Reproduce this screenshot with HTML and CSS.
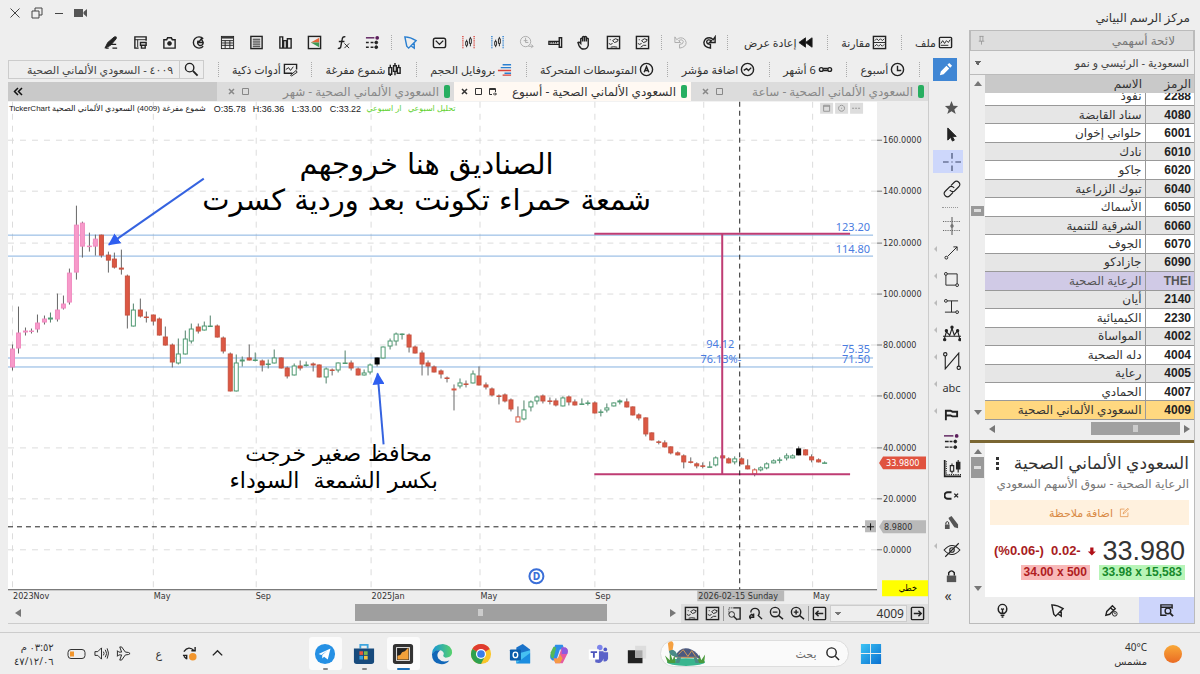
FILE: index.html
```
<!DOCTYPE html>
<html lang="ar" dir="rtl">
<head>
    <meta charset="UTF-8">
    <meta name="viewport" content="width=device-width, initial-scale=1.0">
    <title>مركز الرسم البياني</title>
    <link rel="stylesheet" href="styles.css">
</head>
<body>
    <header class="titlebar">
        <h1>مركز الرسم البياني</h1>
        <div class="window-controls">
            <button aria-label="إغلاق"><svg viewBox="0 0 16 16"><path d="M3.500 3.500l9 9M12.500 3.500l-9 9"/></svg></button>
            <button aria-label="تصغير النافذة"><svg viewBox="0 0 16 16"><path d="M3 6h7v7H3zM6 6V3h7v7h-3"/></svg></button>
            <button aria-label="إخفاء"><svg viewBox="0 0 16 16"><path d="M4 8.500h8"/></svg></button>
            <button aria-label="تسجيل"><svg class="solid" viewBox="0 0 16 16"><path d="M1 4h9v8H1zM10.500 7l3.500-3v8l-3.500-3z"/></svg></button>
        </div>
    </header>

    <main class="layout">
        <aside class="sidebar">
            <div class="panel-title">
                <span>لائحة أسهمي</span>
                <svg class="ico small" viewBox="0 0 16 16"><path d="M5 2h6M6 2v7M10 2v7M4 9h8M8 9v5"/></svg>
            </div>
            <select class="market" aria-label="السوق">
                <option>السعودية - الرئيسي و نمو</option>
            </select>
            <div class="watchlist">
                <div class="table-wrap">
                    <table>
                        <thead>
                            <tr><th>الرمز</th><th>الاسم</th></tr>
                        </thead>
                        <tbody>
                            <tr class="cut"><td><div>2288</div></td><td><div>نفوذ</div></td></tr>
                            <tr><td>4080</td><td>سناد القابضة</td></tr>
                            <tr><td>6001</td><td>حلواني إخوان</td></tr>
                            <tr><td>6010</td><td>نادك</td></tr>
                            <tr><td>6020</td><td>جاكو</td></tr>
                            <tr><td>6040</td><td>تبوك الزراعية</td></tr>
                            <tr><td>6050</td><td>الأسماك</td></tr>
                            <tr><td>6060</td><td>الشرقية للتنمية</td></tr>
                            <tr><td>6070</td><td>الجوف</td></tr>
                            <tr><td>6090</td><td>جازادكو</td></tr>
                            <tr class="sector"><td>THEI</td><td>الرعاية الصحية</td></tr>
                            <tr><td>2140</td><td>أيان</td></tr>
                            <tr><td>2230</td><td>الكيميائية</td></tr>
                            <tr><td>4002</td><td>المواساة</td></tr>
                            <tr><td>4004</td><td>دله الصحية</td></tr>
                            <tr><td>4005</td><td>رعاية</td></tr>
                            <tr><td>4007</td><td>الحمادي</td></tr>
                            <tr class="selected"><td>4009</td><td>السعودي الألماني الصحية</td></tr>
                        </tbody>
                    </table>
                    <div class="hscroll">
                        <i class="arrow right"></i><span class="hthumb"></span><i class="arrow left"></i>
                    </div>
                </div>
                <div class="vscroll list-scroll">
                    <i class="arrow up"></i><span class="vthumb"></span><i class="arrow down"></i>
                </div>
            </div>
            <div class="quote">
                <div class="quote-body">
                    <div class="quote-name">
                        <h2>السعودي الألماني الصحية</h2>
                        <button class="more" aria-label="المزيد"><i></i><i></i><i></i></button>
                    </div>
                    <p class="quote-sub">الرعاية الصحية - سوق الأسهم السعودي</p>
                    <button class="note">
                        <svg class="ico tiny" viewBox="0 0 16 16"><path d="M13 8v6H2V3h6M6 10l1-3 6-5 1 1-6 6z"/></svg>
                        اضافة ملاحظة
                    </button>
                    <div class="price-row">
                        <strong>33.980</strong>
                        <svg class="drop" viewBox="0 0 12 12"><path d="M4 1h4v5h3l-5 5-5-5h3z"/></svg>
                        <span dir="ltr">(%0.06-)&nbsp; 0.02-</span>
                    </div>
                    <div class="bid-ask">
                        <span class="bid" dir="ltr">33.98 x 15,583</span>
                        <span class="ask" dir="ltr">34.00 x 500</span>
                    </div>
                </div>
                <div class="vscroll quote-scroll">
                    <i class="arrow up"></i><span class="vthumb"></span><i class="arrow down"></i>
                </div>
            </div>
            <nav class="side-tabs">
                <button class="on" aria-label="تفاصيل"><svg class="ico" viewBox="0 0 16 16"><path class="thick" d="M14 6V2H2v11h6M2 4.500h12"/><circle class="thick" cx="9.500" cy="8.500" r="3"/><path class="heavy" d="M12 11l3 3"/></svg></button>
                <button aria-label="رسم"><svg class="ico" viewBox="0 0 16 16"><path class="thick" d="M2 13l1-4 6-6 3 3-6 6zM7 5l3 3"/><circle cx="11.500" cy="11.500" r="2.500"/><path d="M11.500 10v1.500h1"/></svg></button>
                <button aria-label="تنبيهات"><svg class="ico" viewBox="0 0 16 16"><path class="thick" d="M2 2q6 0 12 4l-2 2-6 6-2-2zM9 12l3 2V9"/></svg></button>
                <button aria-label="أفكار"><svg class="ico" viewBox="0 0 16 16"><path class="thick" d="M6 11Q3 9 3.500 6a4.500 4.500 0 019 0Q13 9 10 11zM6 13h4M7 15h2M8 11V7l-1.500-1M8 7l1.500-1"/></svg></button>
            </nav>
        </aside>

        <section class="workspace">
            <div class="toolbar">
                <div class="group labels">
                    <button><svg class="ico" viewBox="0 0 16 16"><rect class="thick" x="1.500" y="2.500" width="13" height="11" rx="1"/><path d="M3 9l2-3 2 3 2-3 2 2 2-3M3 11h8"/></svg>ملف</button>
                    <i class="sep"></i>
                    <button><svg class="ico" viewBox="0 0 16 16"><rect class="thick" x="1.500" y="1.500" width="13" height="13"/><path d="M3 6l2-2 2 2 2-2 2 2 2-2M2 8h12M3 12l2-2 2 2 2-2 2 2 2-2"/></svg>مقارنة</button>
                    <i class="sep"></i>
                    <button><svg class="ico solid" viewBox="0 0 16 16"><path d="M8 3v10L1 8zM15 3v10L8 8z"/></svg>إعادة عرض</button>
                </div>
                <i class="sep"></i>
                <div class="group icons">
                    <button aria-label="إعادة"><svg class="ico" viewBox="0 0 16 16"><path class="thick" d="M14 2v6H8l2-2Q6 4 5 7q0 3 4 3v4q-7-1-7-6 1-5 6-5 2 0 4 2z"/></svg></button>
                    <button aria-label="تراجع"><svg class="ico muted" viewBox="0 0 16 16"><path d="M2 2v6h6L6 6q4-2 5 1 0 3-4 3v4q7-1 7-6-1-5-6-5-2 0-4 2z"/></svg></button>
                    <i class="sep"></i>
                    <button aria-label="حفظ قالب"><svg class="ico" viewBox="0 0 16 16"><rect class="thick" x="1.500" y="1.500" width="13" height="13"/><path d="M3 9l2 1 2-1M7 6l3-2 3 1-1 2-3 1zM6 13q3-3 6-2M4 5h1"/></svg></button>
                    <button aria-label="فتح قالب"><svg class="ico" viewBox="0 0 16 16"><rect class="thick" x="1.500" y="1.500" width="13" height="13"/><path d="M3 9l2 1 2-1M7 6l3-2 3 1-1 2-3 1zM5 13q3-1 7 0M4 5h1"/></svg></button>
                    <button aria-label="تحريك"><svg class="ico" viewBox="0 0 16 16"><path class="thick" d="M4 9V4q1-1 2 0v3V2q1-1 2 0v5-5q1-1 2 0v5-3q1-1 2 0v7q-1 4-5 4-3 0-5-4L1 8q1-1 3 1z"/></svg></button>
                    <button aria-label="قياس"><svg class="ico" viewBox="0 0 16 16"><path class="thick" d="M1 7h11v3H1zM12 3h2.500v10H12z"/><path d="M3 7v2M5 7v2M7 7v2M9 7v2"/></svg></button>
                    <button aria-label="سجل"><svg class="ico muted" viewBox="0 0 16 16"><circle cx="7" cy="7" r="5.500"/><path d="M7 3v5h3M9 6l-4 0M10 12h5M13 10l2 2-2 2"/></svg></button>
                    <button aria-label="نطاق أزرق"><svg class="ico" viewBox="0 0 16 16"><path class="blue dots thick" d="M2 1v14M14 1v14"/><path d="M5 7h2v4H5zM9 4h2v5H9zM6 5v2M6 11v2M10 2v2M10 9v3"/></svg></button>
                    <button aria-label="نطاق أحمر"><svg class="ico" viewBox="0 0 16 16"><path class="red dots thick" d="M2 1v14M14 1v14"/><path d="M5 7h2v4H5zM9 4h2v5H9zM6 5v2M6 11v2M10 2v2M10 9v3"/></svg></button>
                    <button aria-label="رسالة"><svg class="ico" viewBox="0 0 16 16"><rect class="thick" x="1.500" y="3.500" width="13" height="10" rx="2"/><path class="thick" d="M4 6l4 4 4-4"/></svg></button>
                    <button aria-label="تنبيه"><svg class="ico" viewBox="0 0 16 16"><path class="blue thick" d="M2 2q6 0 12 4l-2 2-6 6-2-2zM9 12l3 2V9"/></svg></button>
                    <i class="sep"></i>
                    <button aria-label="مستويات"><svg class="ico" viewBox="0 0 16 16"><path class="plum thick" d="M1 3h9"/><path class="thick" d="M1 8h3M6 8h3M1 13h3M6 13h3"/><circle class="dot plum-fill" cx="13" cy="3" r="2"/><circle class="dot" cx="12" cy="8" r="1.500"/><circle class="dot" cx="12" cy="13" r="1.500"/></svg></button>
                    <button aria-label="دالة"><svg class="ico" viewBox="0 0 16 16"><path class="thick" d="M10 2Q7 1 6.500 5L5 13q-1 2-3 1M3 7h6"/><path d="M9 9l5 5M14 9l-5 5"/></svg></button>
                    <button aria-label="ألوان"><svg class="ico" viewBox="0 0 16 16"><rect class="thick" x="1.500" y="1.500" width="13" height="13"/><path class="orange-fill" d="M13 3v5H4z"/><path class="green-fill" d="M13 8v5L4 8z"/></svg></button>
                    <button aria-label="أعمدة"><svg class="ico" viewBox="0 0 16 16"><path class="thick" d="M2 2h3v12H2zM6 6h3v8H6zM10 4h4v10h-4z"/></svg></button>
                    <button aria-label="قائمة"><svg class="ico" viewBox="0 0 16 16"><rect class="thick" x="2" y="1.500" width="12" height="13"/><path d="M4 4.500h8M4 6.500h8M4 8.500h8M4 10.500h8M4 12.500h8"/></svg></button>
                    <button aria-label="جدول"><svg class="ico" viewBox="0 0 16 16"><rect x="1.500" y="1.500" width="13" height="13"/><path class="thick" d="M2 3h12"/><path d="M2 6h12M2 8.500h12M2 11h12M5.500 6v8M10.500 6v8"/></svg></button>
                    <button aria-label="تحديث"><svg class="ico" viewBox="0 0 16 16"><path class="thick" d="M13 4a6 6 0 100 8M13 8H8l3-4 2 4A3 3 0 118 6"/></svg></button>
                    <button aria-label="صورة"><svg class="ico" viewBox="0 0 16 16"><path class="thick" d="M2 5h3l1-2h4l1 2h3v9H2z"/><circle class="dot" cx="8" cy="9" r="2"/></svg></button>
                    <button aria-label="طباعة"><svg class="ico" viewBox="0 0 16 16"><path class="thick" d="M6 14H2V2h12v4"/><path d="M2 5h12M5 5v8"/><path class="thick" d="M8 8h6v3H8zM9 11v3h4v-3"/></svg></button>
                    <button aria-label="قلم"><svg class="ico" viewBox="0 0 16 16"><path class="dot" d="M1 14l3-6 7-6q3-1 2 2L7 11z"/><path class="thick" d="M7 10h6M9 14h5M2 14h3"/></svg></button>
                </div>
            </div>

            <div class="toolbar second">
                <button class="edit" aria-label="تحرير"><svg class="ico" viewBox="0 0 16 16"><path class="white-fill" d="M2 14l1-4 6-6 3 3-6 6zM10 3l2-2 3 3-2 2z"/></svg></button>
                <i class="sep"></i>
                <button><svg class="ico" viewBox="0 0 16 16"><circle class="thick" cx="8" cy="8" r="6.500"/><path class="thick" d="M8 4v5h4"/></svg>أسبوع</button>
                <i class="sep"></i>
                <button><svg class="ico" viewBox="0 0 16 16"><circle class="thick" cx="3.500" cy="8" r="2"/><circle class="thick" cx="12.500" cy="8" r="2"/><path class="thick" d="M5.500 7h5M5.500 9h5"/></svg>6 أشهر</button>
                <i class="sep"></i>
                <button><svg class="ico" viewBox="0 0 16 16"><circle class="thick" cx="8" cy="8" r="6.500"/><path class="thick" d="M4 9l3-2 2 2 3-3"/></svg>اضافة مؤشر</button>
                <i class="sep"></i>
                <button><svg class="ico" viewBox="0 0 16 16"><circle class="thick" cx="8" cy="8" r="6.500"/><path class="thick" d="M5.500 11L8 5l2.500 6M6.500 9h3"/></svg>المتوسطات المتحركة</button>
                <i class="sep"></i>
                <button><svg class="ico" viewBox="0 0 16 16"><path class="blue thick" d="M6 3h9M4 6h11M8 12h7"/><path class="red thick" d="M1 9h14M6 14h9"/></svg>بروفايل الحجم</button>
                <i class="sep"></i>
                <button><svg class="ico" viewBox="0 0 16 16"><path class="thick" d="M2 6h3v7H2zM7 4h3v6H7zM11 6h3v6h-3zM3.500 3v3M3.500 13v2M8.500 1v3M8.500 10v4M12.500 3v3"/></svg>شموع مفرغة</button>
                <i class="sep"></i>
                <button><svg class="ico" viewBox="0 0 16 16"><path class="thick" d="M10 12H1.500V2.500h13V8"/><path d="M3 8l3-2 2 3 3-4M8 14l6-5 1 2-6 4z"/></svg>أدوات ذكية</button>
                <i class="sep"></i>
                <div class="search">
                    <button aria-label="بحث عن سهم"><svg class="ico" viewBox="0 0 16 16"><circle class="thick" cx="6" cy="6" r="4.500"/><path class="heavy" d="M9.500 9.500l5 5"/></svg></button>
                    <input type="text" value="٤٠٠٩ - السعودي الألماني الصحية" aria-label="السهم">
                </div>
            </div>

            <div class="stage">
                <nav class="toolstrip">
                    <button aria-label="المفضلة"><svg class="ico" viewBox="0 0 16 16"><path class="gray-fill" d="M8 1l2 5 5 .5-4 3.500 1.500 5L8 12l-4.500 3L5 10 1 6.500 6 6z"/></svg></button>
                    <button aria-label="مؤشر"><svg class="ico" viewBox="0 0 16 16"><path class="dot" d="M4 1l9 9-4 0 2 4-2 1-2-4-3 3z"/></svg></button>
                    <button class="on" aria-label="تقاطع"><svg class="ico big" viewBox="0 0 16 16"><path d="M8 0v5M8 11v5M0 8h5M11 8h5M7.500 8h1"/></svg></button>
                    <button aria-label="ربط"><svg class="ico big" viewBox="0 0 16 16"><path d="M7 5l3-3q2-2 4 0t0 4l-4 4q-2 1-4-1M9 11l-3 3q-2 2-4 0t0-4l4-4q2-1 4 1"/></svg></button>
                    <i class="line"></i>
                    <button aria-label="خطوط التقاطع"><svg class="ico big soft" viewBox="0 0 16 16"><path class="dots" d="M0 4h16M0 12h16"/><path d="M8 0v16"/><circle cx="8" cy="8" r="1"/></svg></button>
                    <button class="sub" aria-label="خط"><svg class="ico" viewBox="0 0 16 16"><circle cx="2.500" cy="13.500" r="1.500"/><path d="M4 12L14 2M10 2h4v4"/></svg></button>
                    <button class="sub" aria-label="مستطيل"><svg class="ico" viewBox="0 0 16 16"><path d="M2 2h12v12H2z"/><circle class="hole" cx="2" cy="2" r="1.500"/><circle class="hole" cx="14" cy="14" r="1.500"/></svg></button>
                    <button class="sub" aria-label="مدى السعر"><svg class="ico" viewBox="0 0 16 16"><path d="M3 2h12M1 14h12M8 2v12"/><circle class="hole" cx="2" cy="2" r="1.500"/><circle class="hole" cx="14" cy="14" r="1.500"/></svg></button>
                    <button class="sub" aria-label="موجات"><svg class="ico big" viewBox="0 0 16 16"><path d="M1 13l2-7 3 3 2-6 2 6 3-4 2 8M0 10h16"/><circle class="dot" cx="3" cy="5" r="1"/><circle class="dot" cx="8" cy="2" r="1"/><circle class="dot" cx="13" cy="5" r="1"/><circle class="dot" cx="1.500" cy="13" r="1"/><circle class="dot" cx="15" cy="13" r="1"/></svg></button>
                    <button class="sub" aria-label="نمط"><svg class="ico big" viewBox="0 0 16 16"><path d="M2 3v12L14 1v12"/><circle class="hole" cx="2" cy="2" r="1.500"/><circle class="hole" cx="14" cy="14" r="1.500"/></svg></button>
                    <button class="sub text">abc</button>
                    <button class="sub" aria-label="علم"><svg class="ico" viewBox="0 0 16 16"><path class="heavy" d="M2 3v11M2 4h5l2 1h5v5H9L7 9H2"/></svg></button>
                    <button aria-label="مستويات"><svg class="ico" viewBox="0 0 16 16"><path class="plum thick" d="M0 2h10"/><circle class="dot plum-fill" cx="13.500" cy="2" r="2"/><path class="thick" d="M1 8h4M6 8h3M1 14h4M6 14h3"/><circle class="dot" cx="12" cy="8" r="1.500"/><circle class="dot" cx="12" cy="14" r="1.500"/></svg></button>
                    <button aria-label="شموع"><svg class="ico big" viewBox="0 0 16 16"><path class="thick" d="M1.500 0v14.500H16"/><path class="dots" d="M3 1v12M3 13h13"/><path d="M6.500 5h3v5h-3zM8 3v2M8 10v2M13.500 0v11"/><path class="dot" d="M12 2h3v6h-3z"/></svg></button>
                    <button aria-label="مغناطيس"><svg class="ico" viewBox="0 0 16 16"><path class="heavy" d="M8 4.500H4a3.500 3.500 0 000 7h4"/><path class="thick" d="M11 6l4 4M15 6l-4 4"/></svg></button>
                    <button aria-label="قفل الرسم"><svg class="ico" viewBox="0 0 16 16"><path class="gray-fill" d="M5 3l3-2 7 9 0 4-4-1-6-9zM1 10h5v5H1z"/><path d="M2 10V8q1.500-2 3 0v2"/></svg></button>
                    <button class="sub" aria-label="إخفاء"><svg class="ico big" viewBox="0 0 16 16"><path d="M1 8q7-8 14 0-7 8-14 0zM2 14L14 2"/><circle cx="8" cy="8" r="2"/></svg></button>
                    <button aria-label="قفل"><svg class="ico" viewBox="0 0 16 16"><path class="gray-fill" d="M3 7h10v7H3z"/><path class="thick" d="M5 7V4q3-4 6 0v3"/></svg></button>
                    <button class="text collapse">»</button>
                </nav>

                <div class="chart-frame">
                    <div class="tabs">
                        <div class="tab">
                            <i class="pill"></i><a href="#hour">السعودي الألماني الصحية - ساعة</a>
                            <span class="tab-actions">
                                <button aria-label="تكبير"><svg viewBox="0 0 9 9"><path d="M1.500 1.500h6v6h-6z"/></svg></button>
                                <button aria-label="إغلاق"><svg viewBox="0 0 9 9"><path class="thick" d="M2 2l5 5M7 2l-5 5"/></svg></button>
                            </span>
                        </div>
                        <div class="tab active">
                            <i class="pill"></i><a href="#week">السعودي الألماني الصحية - أسبوع</a>
                            <span class="tab-actions">
                                <button aria-label="فصل"><svg viewBox="0 0 9 9"><path d="M4 7.500H1.500v-6h6V5M1 2.500h7M5 7h3M7 5.500L8.500 7 7 8.500"/></svg></button>
                                <button aria-label="تكبير"><svg viewBox="0 0 9 9"><path d="M1.500 1.500h6v6h-6z"/></svg></button>
                                <button aria-label="إغلاق"><svg viewBox="0 0 9 9"><path class="thick" d="M2 2l5 5M7 2l-5 5"/></svg></button>
                            </span>
                        </div>
                        <div class="tab">
                            <i class="pill"></i><a href="#month">السعودي الألماني الصحية - شهر</a>
                            <span class="tab-actions">
                                <button aria-label="تكبير"><svg viewBox="0 0 9 9"><path d="M1.500 1.500h6v6h-6z"/></svg></button>
                                <button aria-label="إغلاق"><svg viewBox="0 0 9 9"><path class="thick" d="M2 2l5 5M7 2l-5 5"/></svg></button>
                            </span>
                        </div>
                        <button class="tabs-more" aria-label="المزيد"><svg viewBox="0 0 10 9"><path class="thick" d="M5 1L1.500 4.500 5 8M9 1L5.500 4.500 9 8"/></svg></button>
                    </div>

                    <svg class="chart" viewBox="8 102 921 502">
                        <defs>
                            <marker id="head" viewBox="0 0 12 12" refX="11" refY="6" markerWidth="12" markerHeight="12" markerUnits="userSpaceOnUse" orient="auto">
                                <path class="head" d="M0 0l12 6-12 6z"/>
                            </marker>
                        </defs>
                        <rect class="paper" x="8" y="102" width="870" height="488"/>
                        <g id="grid"></g>
                        <g class="level">
                            <path d="M8 235.500h866M8 256.500h866M8 358.500h866M8 367.500h866"/>
                        </g>
                        <g id="candles"></g>
                        <g class="level-text">
                            <text x="871" y="231">123.20</text>
                            <text x="871" y="253">114.80</text>
                            <text x="871" y="354">75.35</text>
                            <text x="871" y="364">71.50</text>
                            <text x="735" y="349">94.12</text>
                            <text x="742" y="364">76.13%-</text>
                        </g>
                        <path class="range" d="M595 234h256M723 234v241M595 475h256"/>
                        <path class="cross" d="M740.500 102v488M8 527.500h858"/>
                        <path class="axis-line" d="M8 590.500h870"/>
                        <path class="pointer" d="M204 179L109 245"/>
                        <path class="pointer" d="M384 445L378 374"/>

                        <g class="annotation">
                            <text class="large" x="427" y="174">الصناديق هنا خروجهم</text>
                            <text class="large" x="427" y="210">شمعة حمراء تكونت بعد وردية كسرت</text>
                            <text class="medium" x="339" y="462">محافظ صغير خرجت</text>
                            <text class="medium" x="334" y="489">بكسر الشمعة&nbsp; السوداء</text>
                        </g>

                        <g class="info">
                            <text class="rtl" x="206" y="111">شموع مفرغة (4009) السعودي الألماني الصحية TickerChart</text>
                            <text x="214" y="112">O:35.78</text>
                            <text x="253" y="112">H:36.36</text>
                            <text x="292" y="112">L:33.00</text>
                            <text x="330" y="112">C:33.22</text>
                            <text class="rtl lime" x="402" y="111">ار اسبوعي</text>
                            <text class="rtl lime" x="456" y="111">تحليل اسبوعي</text>
                        </g>
                        <g class="mini">
                            <path d="M821 103h13v11h-13zM836 103h13v11h-13zM851 103h13v11h-13z"/>
                            <path class="glyph" d="M824.500 105.500h6v6h-6zM824 106.500h7M842.500 105.500a3 3 0 11-.1 0M842.500 108v1M853 108.500h2M856 108.500h2M859 108.500h2"/>
                        </g>

                        <circle class="dividend" cx="537" cy="577" r="7"/>
                        <text class="dividend-text" x="537" y="581">D</text>

                        <g id="prices" class="ticks"></g>
                        <g class="ticks">
                            <text x="13" y="600">2023Nov</text>
                            <text x="154" y="600">May</text>
                            <text x="256" y="600">Sep</text>
                            <text x="372" y="600">2025Jan</text>
                            <text x="481" y="600">May</text>
                            <text x="596" y="600">Sep</text>
                            <rect class="hover-bg" x="698" y="591" width="87" height="11"/>
                            <text x="699" y="600">2026-02-15 Sunday</text>
                            <text x="814" y="600">May</text>
                        </g>
                        <path class="last" d="M880 463.500l4-6.500h43v13h-43z"/>
                        <text class="last-text" x="887" y="467">33.9800</text>
                        <path class="hover-bg" d="M880 527.500l4-6.500h43v13h-43zM866 521h11v12h-11z"/>
                        <path class="plus" d="M868 527.500h7M871.500 524v7"/>
                        <text class="tick-text" x="885" y="531">8.9800</text>
                        <rect class="linear" x="883" y="581" width="46" height="16"/>
                        <text class="rtl linear-text" x="918" y="592">خطي</text>
                    </svg>

                    <div class="chart-footer" dir="ltr">
                        <div class="hscroll wide">
                            <i class="arrow left"></i><span class="hthumb"></span><i class="arrow right"></i>
                        </div>
                        <div class="footer-tools">
                            <button aria-label="حفظ"><svg class="ico" viewBox="0 0 16 16"><rect class="thick" x="1.500" y="1.500" width="13" height="13"/><path d="M3 9l2 1 2-1M7 6l3-2 3 1-1 2-3 1zM5 13q3-1 7 0M4 5h1"/></svg></button>
                            <button aria-label="استعادة"><svg class="ico" viewBox="0 0 16 16"><rect class="thick" x="1.500" y="1.500" width="13" height="13"/><path d="M3 9l2 1 2-1M7 6l3-2 3 1-1 2-3 1zM6 13q3-3 6-2M4 5h1"/></svg></button>
                            <i class="sep"></i>
                            <button aria-label="تكبير منطقة"><svg class="ico" viewBox="0 0 16 16"><path class="thick" d="M7 2h7v12h-3"/><path class="dots" d="M2 8V2h5"/><circle cx="5" cy="9" r="3"/><path class="thick" d="M7 11l4 4"/></svg></button>
                            <button aria-label="إعادة التكبير"><svg class="ico" viewBox="0 0 16 16"><path class="thick" d="M3 7a4.500 4.500 0 119 0q0 2-1 3l4 4M3 14q-3-3 1-5l2 2M6 8v4H2"/></svg></button>
                            <button aria-label="تصغير"><svg class="ico" viewBox="0 0 16 16"><circle class="thick" cx="6.500" cy="6.500" r="5"/><path class="thick" d="M10 10l5 4M4 6.500h5"/></svg></button>
                            <button aria-label="تكبير"><svg class="ico" viewBox="0 0 16 16"><circle class="thick" cx="6.500" cy="6.500" r="5"/><path class="thick" d="M10 10l5 4M4 6.500h5M6.500 4v5"/></svg></button>
                            <i class="sep"></i>
                            <button aria-label="السابق"><svg class="ico" viewBox="0 0 16 16"><rect class="thick" x="1.500" y="1.500" width="13" height="13" rx="1"/><path class="thick" d="M12 8H4M7 5L4 8l3 3"/></svg></button>
                            <select class="symbol" aria-label="الرمز"><option>4009</option></select>
                            <button aria-label="التالي"><svg class="ico" viewBox="0 0 16 16"><rect class="thick" x="1.500" y="1.500" width="13" height="13" rx="1"/><path class="thick" d="M4 8h8M9 5l3 3-3 3"/></svg></button>
                        </div>
                    </div>
                </div>
            </div>
        </section>
    </main>

    <footer class="taskbar">
        <div class="weather">
            <i class="sun"></i>
            <div><span dir="ltr">40°C</span><br>مشمس</div>
        </div>
        <div class="apps">
            <button class="start" aria-label="ابدأ"><svg viewBox="0 0 24 24"><defs><linearGradient id="win" x2="1" y2="1"><stop stop-color="#3cc4f5"/><stop offset="1" stop-color="#0a6fd0"/></linearGradient></defs><path fill="url(#win)" d="M1 1h10v10H1zM12 1h11v10H12zM1 12h10v11H1zM12 12h11v11H12z"/></svg></button>
            <label class="task-search">
                <svg class="ico" viewBox="0 0 16 16"><circle class="thick" cx="7" cy="7" r="5"/><path class="thick" d="M11 11l4 4"/></svg>
                <input type="text" placeholder="بحث">
                <svg class="turtle" viewBox="0 0 44 26"><ellipse cx="22" cy="22" rx="20" ry="4" fill="#39b58e"/><path d="M3 23L0 15l5 5V11l3 9 2-6 1 9zM34 23l2-9 2 6 4-6-1 9z" fill="#4b9b3d"/><path d="M10 17q6-13 18-8 6 3 9 9z" fill="#4c5a80"/><path d="M14 14l5-5 5 7 4-6 4 6M12 17h22" stroke="#d79c55" fill="none"/><path d="M11 16Q5 16 4 10q3-3 7 1 2 3 3 6zM13 17l-2 6h4l2-6zM30 17l2 6h4l-3-6z" fill="#4a8b87"/><path d="M4 10L3 2q5-4 6 1L8 9z" fill="#f5a142"/></svg>
            </label>
            <button aria-label="عرض المهام"><svg viewBox="0 0 24 24"><path fill="#ddd" d="M10 3h12v14H10z"/><path fill="#222" d="M2 8h8v8h8v6H2z"/><path fill="#aaa" d="M10 8h8v8h-8z"/></svg></button>
            <button aria-label="Teams"><svg viewBox="0 0 24 24"><circle cx="14" cy="5" r="3" fill="#7b83eb"/><circle cx="20" cy="7" r="2" fill="#5059c9"/><path fill="#5b62c8" d="M9 9h9v8q-2 7-9 4zM18 10h5v7q-1 4-5 3z"/><rect x="2" y="7" width="11" height="11" fill="#fff"/><path stroke="#4b53bc" stroke-width="2" d="M4 10h7M7.500 10v6"/></svg></button>
            <button aria-label="Copilot"><svg viewBox="0 0 24 24"><path fill="#2d8de8" d="M8 2h8l2 5h-5l-4 12H5q-4-2-2-7z"/><path fill="#54b857" d="M3 10L6 4l3 1-3 12q-4 0-3-7z"/><path fill="#e55aa0" d="M16 22H8l-2-5h5l4-12h4q4 2 2 7z"/><path fill="#f59a45" d="M8 22l-2-5h5l2-5 3 5-3 5z"/><path fill="#8c5ae0" d="M15 5h4q4 2 2 7l-6 0z"/></svg></button>
            <button aria-label="Outlook"><svg viewBox="0 0 24 24"><path fill="#1a72c9" d="M8 5l7-4 8 6v15H8z"/><path fill="#46c0f2" d="M8 12l15-4v14H8z"/><path fill="#1b8de0" d="M8 22l15-11v11z"/><rect x="1" y="7" width="12" height="12" rx="1" fill="#0b5cab"/><ellipse cx="7" cy="13" rx="2.500" ry="3" fill="none" stroke="#fff" stroke-width="1.500"/></svg></button>
            <button aria-label="Chrome"><svg viewBox="0 0 24 24"><circle cx="12" cy="12" r="11" fill="#f9c529"/><path fill="#df3b30" d="M12 12L2.500 6.500a11 11 0 0119 0z"/><path fill="#2fa150" d="M12 12L2.500 6.500A11 11 0 0012 23l4-8z"/><circle cx="12" cy="12" r="5.500" fill="#fff"/><circle cx="12" cy="12" r="4.200" fill="#3a7de8"/></svg></button>
            <button aria-label="Edge"><svg viewBox="0 0 24 24"><defs><linearGradient id="edge" x2="1"><stop stop-color="#1794d8"/><stop offset="1" stop-color="#57d26b"/></linearGradient></defs><path fill="url(#edge)" d="M1 12Q2 1 13 1q10 1 10 10-1 5-7 5-4-1-2-4 0-3-4-4-6 0-9 4z"/><path fill="#1167b8" d="M1 12q3-5 9-4-5 4-2 9 4 5 12 2-4 5-10 4-9-1-9-11z"/></svg></button>
            <button class="open current" aria-label="TickerChart"><svg viewBox="0 0 24 24"><rect x="1" y="1" width="22" height="22" rx="3" fill="#333"/><rect x="5" y="5" width="14" height="14" fill="#222" stroke="#eee"/><path fill="#f2a13a" d="M6 18v-4l3-1 2-3 3-1 4-4v13z"/></svg></button>
            <button class="open" aria-label="Store"><svg viewBox="0 0 24 24"><path d="M8 6V2h8v4" fill="none" stroke="#3fa5de" stroke-width="2"/><path fill="#174a7c" d="M1 6h22v14q0 3-3 3H4q-3 0-3-3z"/><path fill="#e8573c" d="M7 9h4v4H7z"/><path fill="#7fba4a" d="M12 9h4v4h-4z"/><path fill="#34a2e0" d="M7 14h4v4H7z"/><path fill="#f7c33d" d="M12 14h4v4h-4z"/></svg></button>
            <button class="open lit" aria-label="Telegram"><svg viewBox="0 0 24 24"><circle cx="12" cy="12" r="11" fill="#2590e4"/><path fill="#fff" d="M5 12l13-6-3 12-4-3-2 2v-4l6-5-7 5z"/></svg></button>
        </div>
        <div class="tray">
            <button aria-label="الأيقونات المخفية"><svg class="ico" viewBox="0 0 16 16"><path class="thick" d="M3 10l5-5 5 5"/></svg></button>
            <button aria-label="تحديثات"><svg class="ico" viewBox="0 0 16 16"><path class="thick" d="M2 6q5-7 11-1M14 1v4h-4M1 10h4v4M2 11l3 3"/><circle cx="11.500" cy="11.500" r="4" fill="#f2962d" stroke="none"/></svg></button>
            <span class="lang">ع</span>
            <button class="status" aria-label="الشبكة والصوت والبطارية">
                <svg class="ico" viewBox="0 0 16 16"><path d="M15 8q-1-1.500-5-1.500L6 1H4l2 5.500H3L1.500 5v6L3 9.500h3L4 15h2l4-5.500q4 0 5-1.500z"/></svg>
                <svg class="ico" viewBox="0 0 16 16"><path d="M1 6h3l4-4v12l-4-4H1zM10 6q1.500 2 0 4M12 4q3 4 0 8M14 2.500q3 5 0 11"/></svg>
                <svg class="battery" viewBox="0 0 20 12"><rect x="1" y="1.500" width="17" height="9" rx="3"/><path d="M3 3.500h4v5H3z"/></svg>
            </button>
            <div class="clock">٠٣:٥٢ م<br>٤٧/١٢/٠٦</div>
        </div>
    </footer>

    <script src="chart.js"></script>
</body>
</html>
```
FILE: styles.css
```
* {
    box-sizing: border-box;
}
body {
    margin: 0;
    min-height: 100vh;
    display: flex;
    flex-direction: column;
    font-family: "Noto Sans", "DejaVu Sans", sans-serif;
    font-size: 11px;
    color: #333;
    background-color: #eee;
}
button,
input,
select {
    font: inherit;
    color: inherit;
    border: none;
    background: none;
    padding: 0;
    margin: 0;
}
button {
    display: flex;
    align-items: center;
    justify-content: center;
    cursor: pointer;
    white-space: nowrap;
}
h1,
h2,
p {
    margin: 0;
    font-weight: normal;
}
a {
    color: inherit;
    text-decoration: none;
}

/* icons */
.ico {
    width: 15px;
    height: 15px;
    flex: none;
    fill: none;
    stroke: #222;
    stroke-width: 1;
}
.ico.small {
    width: 11px;
    height: 11px;
    stroke: #888;
}
.ico.tiny {
    width: 11px;
    height: 11px;
    stroke: #e08a3c;
}
.ico.big {
    width: 18px;
    height: 18px;
}
.ico.soft {
    stroke: #666;
}
.ico.muted {
    stroke: #aaa;
}
.ico.solid {
    fill: #111;
}
.thick {
    stroke-width: 1.5;
}
.heavy {
    stroke-width: 2;
}
.blue {
    stroke: #2a7fd0;
}
.red {
    stroke: #d8433b;
}
.plum {
    stroke: #5b1d5b;
}
.dots {
    stroke-dasharray: 1 1;
}
.dot {
    fill: #222;
}
.hole {
    fill: #eee;
}
.plum-fill {
    fill: #5b1d5b;
    stroke: none;
}
.orange-fill {
    fill: #e5673a;
    stroke: none;
}
.green-fill {
    fill: #3f9a55;
    stroke: none;
}
.white-fill {
    fill: #fff;
    stroke: none;
}
.gray-fill {
    fill: #555;
    stroke: none;
}

/* title bar */
.titlebar {
    display: flex;
    justify-content: space-between;
    align-items: flex-start;
    height: 28px;
    padding: 5px 10px 0 6px;
}
.titlebar h1 {
    font-size: 12px;
    line-height: 26px;
}
.window-controls {
    display: flex;
    flex-direction: row-reverse;
    gap: 4px;
}
.window-controls svg {
    width: 18px;
    height: 16px;
    fill: none;
    stroke: #444;
}
.window-controls .solid {
    fill: #555;
    stroke: none;
}

.layout {
    flex: 1;
    display: flex;
    gap: 6px;
    padding: 0 5px 8px 8px;
    min-height: 0;
}
.workspace {
    flex: 1;
    min-width: 0;
    display: flex;
    flex-direction: column;
}

/* toolbars */
.toolbar {
    display: flex;
    align-items: center;
    height: 28px;
    padding-inline-start: 6px;
}
.toolbar button {
    gap: 2px;
}
.labels {
    flex: 1;
    display: flex;
    justify-content: space-between;
    align-items: center;
    padding-left: 16px;
    padding-right: 4px;
}
.icons {
    display: flex;
    align-items: center;
    padding-right: 3px;
    padding-left: 89px;
}
.icons button {
    width: 29px;
}
.sep {
    width: 0;
    height: 15px;
    border-left: 1px dotted #aaa;
}
.icons .sep {
    margin: 0 4px;
}
.toolbar.second {
    height: 26px;
    justify-content: space-between;
}
.edit {
    width: 24px;
    height: 23px;
    background-color: #3f86d4;
}
.search {
    display: flex;
    width: 196px;
    height: 19px;
    border: 1px solid #ccc;
}
.search button {
    width: 24px;
    border-left: 1px solid #ccc;
}
.search input {
    flex: 1;
    min-width: 0;
    padding: 0 6px;
    color: #444;
}

.stage {
    flex: 1;
    display: flex;
    min-height: 0;
}
.toolstrip {
    width: 34px;
    display: flex;
    flex-direction: column;
    align-items: stretch;
    padding-top: 12px;
    padding-left: 4px;
}
.toolstrip button {
    height: 27px;
    padding-left: 7px;
    position: relative;
}
.toolstrip .on {
    background: linear-gradient(#cdd7fb, #cdd7fb) center / 100% 23px no-repeat;
}
.toolstrip .on svg {
    stroke: #3a4468;
}
.toolstrip .sub::before {
    content: "";
    position: absolute;
    left: 1px;
    top: 7px;
    border: 3px solid transparent;
    border-left: none;
    border-right-color: #bbb;
}
.toolstrip .line {
    width: 16px;
    height: 1px;
    margin: 5px 5px 4px auto;
    border-top: 1px dotted #999;
}
.toolstrip .collapse {
    height: 12px;
    padding: 0;
    font-size: 14px;
    line-height: 12px;
}

.chart-frame {
    flex: 1;
    min-width: 0;
    display: flex;
    flex-direction: column;
    border-bottom: 1px solid #ccc;
    border-right: 1px solid #ccc;
}
.tabs {
    display: flex;
    height: 19px;
    background-color: #c9c9c9;
}
.tab {
    flex: 0 1 237px;
    display: flex;
    align-items: center;
    gap: 5px;
    padding: 0 4px 0 10px;
    font-size: 12px;
    line-height: 16px;
    color: #888;
    background-color: #dcdcdc;
    white-space: nowrap;
}
.tab.active {
    padding-left: 6px;
    color: #333;
    background-color: #fff9f3;
}
.pill {
    width: 6px;
    height: 13px;
    border-radius: 2px;
    background-color: #27ae60;
}
.tab-actions {
    display: flex;
    gap: 5px;
    margin-inline-start: auto;
}
.tab-actions svg {
    width: 9px;
    height: 9px;
    fill: none;
    stroke: currentColor;
}
.tabs-more {
    margin-inline-start: auto;
    padding: 0 5px;
}
.tabs-more svg {
    width: 10px;
    height: 9px;
    fill: none;
    stroke: #111;
}

/* chart */
.chart {
    flex: 1;
    min-height: 0;
    width: 100%;
    direction: ltr;
    font-family: "DejaVu Sans Condensed", "DejaVu Sans", sans-serif;
}
.chart path {
    fill: none;
}
.paper {
    fill: #fff;
}
.grid {
    stroke: #dcdcdc;
    stroke-dasharray: 6 6;
}
.level path {
    stroke: #86b1e0;
}
.level-text {
    font-family: "Noto Sans", sans-serif;
    font-size: 11px;
    fill: #4a7ce0;
    text-anchor: end;
}
.range {
    stroke: #bf3c73;
    stroke-width: 2;
}
.cross {
    stroke: #222;
    stroke-dasharray: 5 4;
}
.axis-line {
    stroke: #555;
}
.pointer {
    stroke: #3563e0;
    stroke-width: 2;
    marker-end: url(#head);
}
.chart .head {
    fill: #2f5ff0;
}
.annotation {
    font-family: "DejaVu Sans", sans-serif;
    fill: #000;
    text-anchor: middle;
}
.large {
    font-size: 29px;
}
.medium {
    font-size: 22px;
}
.rtl {
    direction: rtl;
    unicode-bidi: embed;
}
.info {
    font-family: "Liberation Sans", "DejaVu Sans", sans-serif;
    font-size: 9px;
    fill: #222;
}
.info .rtl {
    font-size: 8px;
}
.info .lime {
    fill: #5fd12f;
}
.chart .mini path {
    fill: #ddd;
}
.chart .mini .glyph {
    fill: none;
    stroke: #999;
}
.dividend {
    fill: #fff;
    stroke: #3b6fd8;
    stroke-width: 2;
}
.dividend-text {
    font-size: 10px;
    font-weight: bold;
    text-anchor: middle;
    fill: #3b6fd8;
}
.ticks,
.tick-text,
.last-text {
    font-size: 9px;
    fill: #333;
}
.tick {
    stroke: #777;
}
.chart .hover-bg {
    fill: #b9b9b9;
}
.chart .last {
    fill: #e0533f;
}
.last-text {
    fill: #fff;
}
.plus {
    stroke: #111;
}
.linear {
    fill: #ff0;
}
.linear-text {
    font-size: 9px;
}
.wick {
    stroke: #666;
}
.up {
    fill: #fff;
    stroke: #4f9a72;
}
.wick.up {
    stroke: #4f7f68;
}
.fall {
    fill: #dc5844;
    stroke: #c8523f;
}
.fall-hollow {
    fill: #fff;
    stroke: #dc5844;
}
.pink {
    fill: #f79aca;
    stroke: #f08cc0;
}
.black {
    fill: #000;
    stroke: #000;
}

.chart-footer {
    display: flex;
    height: 19px;
}
.hscroll {
    display: flex;
    align-items: center;
    height: 17px;
}
.arrow {
    width: 0;
    height: 0;
    border: 4px solid transparent;
}
.arrow.left {
    border-left: none;
    border-right: 6px solid #777;
}
.arrow.right {
    border-right: none;
    border-left: 6px solid #777;
}
.arrow.up {
    border-top: none;
    border-bottom: 5px solid #777;
}
.arrow.down {
    border-bottom: none;
    border-top: 5px solid #777;
}
.hthumb {
    background: linear-gradient(#ccc, #ccc) center / 5px 7px no-repeat #a0a0a0;
    align-self: stretch;
}
.wide {
    flex: 1;
    justify-content: space-between;
    padding: 0 5px 0 7px;
}
.wide .hthumb {
    width: 38%;
    margin-left: 41%;
}
.footer-tools {
    display: flex;
    align-items: center;
    background-color: #dedede;
}
.footer-tools button {
    width: 21px;
}
.footer-tools .sep {
    border-left: 1px solid #999;
}
.symbol {
    width: 77px;
    height: 17px;
    padding: 0 2px 0 8px;
    direction: rtl;
    font-size: 12px;
    line-height: 13px;
    appearance: none;
    border: 1px solid #ccc;
    background:
        linear-gradient(to top right, transparent 50%, #777 50%) 4px 6px / 3px 4px no-repeat,
        linear-gradient(to top left, transparent 50%, #777 50%) 7px 6px / 3px 4px no-repeat,
        #eee;
}

/* sidebar */
.sidebar {
    width: 226px;
    display: flex;
    flex-direction: column;
    border: 1px solid #bbb;
    border-top: none;
    margin-top: 2px;
}
.panel-title {
    display: flex;
    justify-content: space-between;
    align-items: center;
    height: 21px;
    padding: 0 18px 0 5px;
    font-size: 12px;
    color: #777;
    background-color: #ddd;
    border: 1px solid #bbb;
}
.market {
    height: 24px;
    padding: 0 5px;
    color: #444;
    appearance: none;
    border-bottom: 1px solid #bbb;
    background:
        linear-gradient(to top right, transparent 50%, #666 50%) 5px 10px / 3px 5px no-repeat,
        linear-gradient(to top left, transparent 50%, #666 50%) 8px 10px / 3px 5px no-repeat;
}
.watchlist,
.quote {
    display: flex;
}
.table-wrap {
    flex: 1;
    display: flex;
    flex-direction: column;
}
table {
    width: 100%;
    height: 345px;
    border-collapse: collapse;
    font-size: 12px;
    line-height: 16px;
}
th,
td {
    padding: 0 3px;
    text-align: right;
    border-bottom: 1px solid #999;
    font-weight: normal;
}
th {
    background-color: #c9c9c9;
    border: none;
    height: 18px;
}
td:first-child {
    width: 49px;
    font: bold 12px/16px "Liberation Sans", sans-serif;
    border-left: 1px solid #999;
    color: #222;
}
tr:nth-child(odd) td {
    background-color: #fff;
}
tr:nth-child(even) td {
    background-color: #e6e6e6;
}
.cut div {
    display: flex;
    align-items: flex-end;
    height: 11px;
    overflow: hidden;
}
.sector td:nth-child(n) {
    background-color: #d0cae6;
    color: #555;
}
tr.selected td {
    background-color: #ffd880;
}
.table-wrap .hscroll {
    gap: 4px;
    padding: 2px 4px;
}
.table-wrap .hthumb {
    width: 89px;
    height: 13px;
}
.table-wrap .left {
    margin-inline-start: auto;
}
.vscroll {
    width: 15px;
    display: flex;
    flex-direction: column;
    align-items: center;
    padding: 6px 0;
}
.vthumb {
    width: 13px;
    background: linear-gradient(#ddd, #ddd) center / 7px 3px no-repeat #999;
}
.list-scroll {
    justify-content: space-between;
    padding-bottom: 22px;
}
.list-scroll .vthumb {
    height: 10px;
    margin-bottom: 75px;
}
.quote {
    flex: 1;
    min-height: 0;
    margin-top: 3px;
    border-top: 3px solid #7a6632;
}
.quote-body {
    flex: 1;
    min-width: 0;
    padding: 9px 5px 0;
    background-color: #fff;
}
.quote-name {
    display: flex;
    align-items: center;
    justify-content: space-between;
}
.quote-name h2 {
    font-size: 17px;
    line-height: 22px;
    white-space: nowrap;
}
.more {
    flex-direction: column;
    gap: 2px;
    width: 14px;
}
.more i {
    width: 3px;
    height: 3px;
    background-color: #333;
}
.quote-sub {
    font-size: 12px;
    color: #777;
    line-height: 20px;
    white-space: nowrap;
}
.note {
    width: 100%;
    height: 25px;
    margin-top: 6px;
    gap: 6px;
    color: #d98a45;
    background-color: #fff1de;
}
.price-row {
    display: flex;
    align-items: center;
    gap: 6px;
    margin-top: 12px;
    padding: 0 4px;
    font: bold 13px/28px "Liberation Sans", sans-serif;
    color: #a81c22;
    white-space: nowrap;
}
.price-row strong {
    font-size: 27px;
    font-weight: normal;
    color: #333;
}
.drop {
    width: 11px;
    height: 11px;
    fill: #b01018;
}
.bid-ask {
    display: flex;
    gap: 9px;
    padding: 0 4px;
    font: bold 12px/15px "Liberation Sans", sans-serif;
    white-space: nowrap;
}
.bid-ask span {
    padding: 0 3px;
}
.bid {
    color: #178a2c;
    background-color: #b8f5b8;
}
.ask {
    color: #b01c22;
    background-color: #f8b8b8;
}
.quote-scroll .vthumb {
    height: 21px;
    margin-top: 3px;
}
.quote-scroll .down {
    margin-top: auto;
}
.side-tabs {
    display: flex;
    height: 26px;
    padding-left: 5px;
}
.side-tabs button {
    flex: 1;
}
.side-tabs .on {
    background-color: #cdd5fb;
}

/* taskbar */
.taskbar {
    display: grid;
    grid-template-columns: 1fr auto 1fr;
    align-items: center;
    height: 42px;
    padding: 0 18px 0 14px;
    border-top: 1px solid #ccc;
}
.weather {
    display: flex;
    align-items: center;
    gap: 17px;
    font-size: 10px;
    line-height: 14px;
}
.sun {
    width: 18px;
    height: 18px;
    border-radius: 50%;
    background: linear-gradient(#f9a938, #ea6b24);
}
.apps {
    display: flex;
    align-items: center;
    gap: 6px;
}
.apps > button {
    width: 33px;
    height: 33px;
    border-radius: 3px;
    position: relative;
}
.apps > button svg {
    width: 22px;
    height: 22px;
}
.apps .lit,
.apps .current {
    background-color: #fbfbfb;
}
.open::after {
    content: "";
    position: absolute;
    bottom: 0;
    left: 14px;
    width: 5px;
    height: 2px;
    border-radius: 1px;
    background-color: #888;
}
.current::after {
    left: 10px;
    width: 13px;
    background-color: #1b6fb8;
}
.task-search {
    display: flex;
    align-items: center;
    gap: 8px;
    width: 189px;
    height: 27px;
    padding: 0 8px 0 4px;
    border: 1px solid #ddd;
    border-radius: 14px;
    background-color: #fafafa;
}
.task-search input {
    flex: 1;
    min-width: 0;
}
.task-search input::placeholder {
    color: #666;
}
.turtle {
    width: 42px;
    height: 25px;
}
.tray {
    display: flex;
    align-items: center;
    justify-content: flex-end;
    gap: 13px;
}
.lang {
    width: 20px;
    text-align: center;
}
.status {
    gap: 7px;
}
.tray .status {
    margin-right: 5px;
}
.battery {
    width: 20px;
    height: 12px;
    fill: none;
    stroke: #333;
}
.battery path {
    fill: #f2962d;
    stroke: none;
}
.clock {
    font-size: 10px;
    line-height: 14px;
    white-space: nowrap;
}
```
FILE: chart.js
```
const NS = 'http://www.w3.org/2000/svg';
const FIRST_X = 12.3;
const STEP = 6.404;

function add(parent, tag, attrs, text) {
    const el = document.createElementNS(NS, tag);
    for (const key in attrs) {
        el.setAttribute(key, attrs[key]);
    }
    if (text) {
        el.textContent = text;
    }
    parent.appendChild(el);
}

const styles = { p: 'pink', r: 'fall', g: 'up', h: 'fall-hollow', k: 'black' };

// kind, high, top of body, bottom of body, low
const candles = `
p 345 349 368 371|p 307 333 349 354|p 328 331 333 336|p 329 331 332 334|p 315 323 330 333|p 316 319 323 325
g 313 318 320 323|p 294 310 320 322|p 296 304 309 310|p 269 273 303 305|p 206 225 273 280|p 222 223 247 258
p 233 246 247 252|p 235 239 247 256|r 235 235 256 258|r 252 255 261 273|r 253 259 268 269|r 250 268 270 275
r 275 276 316 329|g 304 310 327 327|r 299 310 317 318|r 312 317 318 323|r 315 315 322 326|r 318 319 336 336
r 327 337 346 346|r 344 345 363 368|g 339 354 364 365|g 331 339 355 355|g 324 329 342 344|r 324 327 332 334
g 322 326 331 331|g 316 326 327 327|r 325 326 338 338|r 337 338 352 354|r 353 354 392 392|g 355 363 392 392
g 357 360 362 367|r 345 358 361 361|g 353 360 361 362|r 360 361 366 372|g 360 364 365 369|g 350 358 364 364
r 358 358 369 369|r 367 368 377 379|g 364 366 376 376|r 361 366 369 371|g 362 365 366 367|r 363 364 366 372
r 365 365 378 378|g 368 369 378 384|r 369 370 371 376|g 363 363 371 373|g 351 363 364 364|r 361 363 369 371
r 368 369 376 376|g 370 373 376 376|g 364 365 373 375|k 358 358 365 367|g 347 347 359 359|g 339 341 347 350
g 333 334 342 346|g 334 334 335 340|r 334 335 348 353|r 346 347 354 354|r 351 353 365 376|r 361 363 367 376
r 366 367 373 373|r 370 371 375 379|r 377 378 379 383|h 385 389 391 411|g 379 383 387 389|r 381 384 385 388
g 371 374 384 384|r 367 376 386 386|r 383 385 388 390|r 388 389 396 397|r 395 396 397 405|r 394 395 402 403
r 399 400 410 412|h 407 417 423 423|g 401 410 420 421|g 401 402 408 412|g 396 397 402 405|r 395 396 402 404
r 398 401 402 405|r 399 401 406 407|g 397 398 407 407|r 396 397 403 406|r 400 402 406 406|g 399 404 405 405
g 401 403 404 406|r 402 403 414 414|g 410 412 413 417|g 404 408 411 413|g 403 403 407 407|g 400 401 403 405
r 399 402 408 408|r 407 407 416 416|r 414 415 419 421|r 418 418 435 437|r 433 433 441 441|r 441 442 443 445
r 441 443 448 448|r 447 447 454 455|r 452 453 456 456|r 455 456 463 469|r 458 462 463 464|r 463 464 467 469
r 463 466 467 469|g 462 467 468 468|g 457 458 466 467|r 456 456 459 459|r 458 459 464 464|g 457 459 463 465
r 458 459 465 465|r 460 466 470 470|h 469 470 475 477|g 467 468 471 472|g 463 464 469 470|g 460 461 464 464
g 458 460 461 464|g 454 456 459 461|g 455 456 459 459|k 447 449 456 456|r 450 450 456 456|r 455 457 461 463
r 459 460 463 463|g 462 463 464 464`.trim().split(/[|\n]/);

const layer = document.getElementById('candles');
candles.forEach((row, i) => {
    const [kind, ...ys] = row.split(' ');
    const [high, top, bottom, low] = ys.map(Number);
    const x = Math.round(FIRST_X + i * STEP - 0.5);
    add(layer, 'path', { class: kind === 'g' ? 'wick up' : 'wick', d: `M${x + 0.5} ${high}V${low}` });
    add(layer, 'rect', { class: styles[kind], x: x - 1.5, y: top + 0.5, width: 4, height: Math.max(bottom - top - 1, 0.5) });
});

const grid = document.getElementById('grid');
const prices = document.getElementById('prices');
for (let price = 0; price <= 160; price += 20) {
    const y = Math.round(550 - price * 2.5625) + 0.5;
    add(grid, 'path', { class: 'grid', d: `M8 ${y}H878` });
    add(prices, 'path', { class: 'tick', d: `M878 ${y}h5` });
    add(prices, 'text', { x: 884, y: y + 3 }, price.toFixed(4));
}
[12.5, 153.5, 256.5, 371.5, 480.5, 595.5, 704.5, 813.5].forEach((x) => {
    add(grid, 'path', { class: 'grid', d: `M${x} 102V590` });
});
```
